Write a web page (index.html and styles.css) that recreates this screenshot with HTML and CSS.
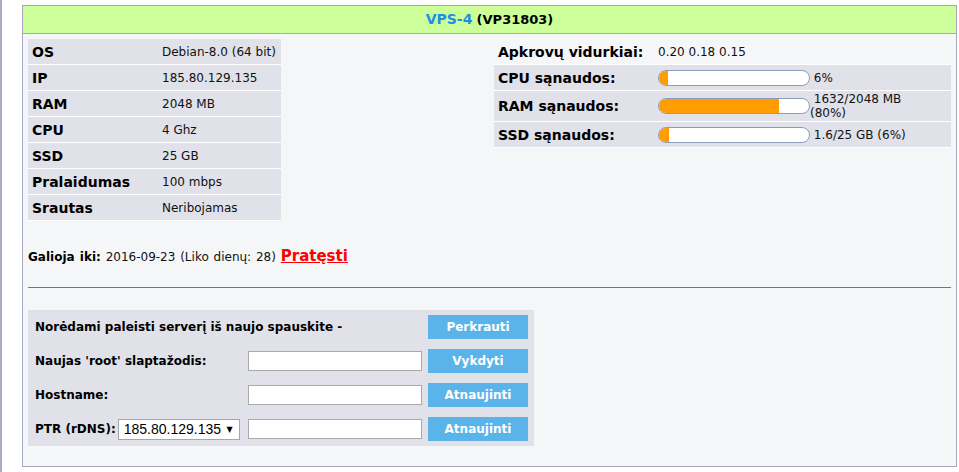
FILE: index.html
```html
<!DOCTYPE html>
<html lang="lt">
<head>
    <meta charset="UTF-8">
    <title>VPS-4 (VP31803)</title>
    <link rel="stylesheet" href="styles.css">
</head>
<body>
<div class="page">
    <div class="vps">
        <div class="vps-head">
            <span class="vps-name">VPS-4</span> <span class="vps-code">(VP31803)</span>
        </div>

        <div class="vps-body">
            <div class="vps-top">
                <table class="spec">
                    <tr><th>OS</th><td>Debian-8.0 (64 bit)</td></tr>
                    <tr><th>IP</th><td>185.80.129.135</td></tr>
                    <tr><th>RAM</th><td>2048 MB</td></tr>
                    <tr><th>CPU</th><td>4 Ghz</td></tr>
                    <tr><th>SSD</th><td>25 GB</td></tr>
                    <tr><th>Pralaidumas</th><td>100 mbps</td></tr>
                    <tr><th>Srautas</th><td>Neribojamas</td></tr>
                </table>

                <table class="usage">
                    <tr class="plain">
                        <th>Apkrovų vidurkiai:</th>
                        <td>0.20 0.18 0.15</td>
                    </tr>
                    <tr>
                        <th>CPU sąnaudos:</th>
                        <td>
                            <div class="meter">
                                <div class="bar"><div class="fill" style="width: 6%"></div></div>
                                <span class="meter-text">&nbsp;6%</span>
                            </div>
                        </td>
                    </tr>
                    <tr>
                        <th>RAM sąnaudos:</th>
                        <td>
                            <div class="meter">
                                <div class="bar"><div class="fill" style="width: 80%"></div></div>
                                <span class="meter-text">&nbsp;1632/2048 MB (80%)</span>
                            </div>
                        </td>
                    </tr>
                    <tr>
                        <th>SSD sąnaudos:</th>
                        <td>
                            <div class="meter">
                                <div class="bar"><div class="fill" style="width: 6.4%"></div></div>
                                <span class="meter-text">&nbsp;1.6/25 GB (6%)</span>
                            </div>
                        </td>
                    </tr>
                </table>
            </div>

            <p class="expiry">
                <b>Galioja iki:</b> 2016-09-23 (Liko dienų: 28)
                <a href="#" class="renew">Pratęsti</a>
            </p>

            <hr>

            <table class="actions">
                <colgroup>
                    <col class="c-label">
                    <col class="c-field">
                    <col class="c-btn">
                </colgroup>
                <tr>
                    <td colspan="2" class="label">Norėdami paleisti serverį iš naujo spauskite -</td>
                    <td><button type="button">Perkrauti</button></td>
                </tr>
                <tr>
                    <td class="label">Naujas 'root' slaptažodis:</td>
                    <td><input type="text"></td>
                    <td><button type="button">Vykdyti</button></td>
                </tr>
                <tr>
                    <td class="label">Hostname:</td>
                    <td><input type="text"></td>
                    <td><button type="button">Atnaujinti</button></td>
                </tr>
                <tr>
                    <td class="label">PTR (rDNS):<span class="select"><select><option>185.80.129.135</option></select></span></td>
                    <td><input type="text"></td>
                    <td><button type="button">Atnaujinti</button></td>
                </tr>
            </table>
        </div>
    </div>
</div>
</body>
</html>
```

FILE: styles.css
```css
:root {
    --border: #a5a8be;
    --row: #e0e1e9;
    --panel: #f5f6f8;
    --head: #ccff99;
    --btn: #5ab4ea;
}

body {
    margin: 0;
    background: #fff;
    color: #111;
    font-family: "DejaVu Sans", Verdana, sans-serif;
    font-size: 12px;
}

.page {
    border-left: 2px solid #a9adc6;
    min-height: 100vh;
    box-sizing: border-box;
    padding: 5px 0 0 20px;
}

.vps {
    width: 935px;
    box-sizing: border-box;
    border: 1px solid var(--border);
    background: var(--panel);
}

.vps-head {
    background: var(--head);
    border-bottom: 1px solid var(--border);
    height: 27px;
    line-height: 27px;
    text-align: center;
    font-weight: bold;
}

.vps-name {
    color: #1e8ee6;
    font-size: 14px;
}

.vps-code {
    color: #000;
    font-size: 13px;
}

.vps-body {
    padding: 5px 5px 0;
}

/* top: specs on the left, usage on the right */
.vps-top {
    display: flex;
    justify-content: space-between;
    align-items: flex-start;
}

.spec,
.usage {
    border-collapse: collapse;
}

.spec th,
.spec td,
.usage th,
.usage td {
    height: 23px;
    padding: 1px 4px;
    border-bottom: 1px solid #fff;
    background: var(--row);
    text-align: left;
    vertical-align: middle;
    line-height: 14px;
}

.spec th,
.usage th {
    font-size: 14px;
    color: #000;
}

.spec th {
    width: 122px;
}

.spec td {
    width: 115px;
}

.usage {
    width: 457px;
}

.usage th {
    width: 152px;
}

.usage .plain th,
.usage .plain td {
    background: none;
}

.meter {
    display: flex;
    align-items: center;
}

.bar {
    flex: none;
    width: 150px;
    height: 14px;
    border: 1px solid #8d9db6;
    border-radius: 8px;
    background: #fff;
    overflow: hidden;
}

.fill {
    height: 100%;
    background: #ff9c00;
}

.meter-text {
    max-width: 124px;
}

.expiry {
    margin: 25px 0 0;
    line-height: 20px;
    color: #111;
    word-spacing: 1px;
}

.expiry b {
    color: #000;
}

.renew {
    color: #f00;
    font-weight: bold;
    font-size: 15px;
    word-spacing: 0;
}

hr {
    margin: 20px 0 22px;
    border: 0;
    border-top: 1px solid #767876;
    height: 0;
}

/* server actions */
.actions {
    border-collapse: collapse;
    table-layout: fixed;
    width: 506px;
    background: var(--row);
    margin-bottom: 20px;
}

.c-label { width: 217px; }
.c-field { width: 180px; }
.c-btn { width: 109px; }

.actions td {
    padding: 5px 3px;
    vertical-align: middle;
}

.actions td:last-child {
    padding-right: 6px;
}

.actions .label {
    padding-left: 7px;
    font-weight: bold;
    color: #000;
    white-space: nowrap;
}

.actions input {
    display: block;
    width: 174px;
    height: 20px;
    box-sizing: border-box;
    border: 1px solid #a9a9a9;
    background: #fff;
    margin: 0;
}

.actions button {
    display: block;
    width: 100px;
    height: 24px;
    border: 0;
    background: var(--btn);
    color: #fff;
    font-family: "DejaVu Sans", Verdana, sans-serif;
    font-size: 12px;
    font-weight: bold;
    padding: 0;
}

.select {
    position: relative;
    display: inline-block;
    vertical-align: middle;
    margin-left: 2px;
}

.select select {
    appearance: none;
    -webkit-appearance: none;
    width: 122px;
    height: 21px;
    box-sizing: border-box;
    border: 1px solid #a6a6a6;
    border-radius: 0;
    background: #fff;
    color: #000;
    font-family: "Liberation Sans", Arial, sans-serif;
    font-size: 14px;
    padding: 0 18px 0 5px;
}

.select::after {
    content: "\25BC";
    position: absolute;
    right: 7px;
    top: 6px;
    font-size: 8px;
    color: #000;
    pointer-events: none;
}
```
